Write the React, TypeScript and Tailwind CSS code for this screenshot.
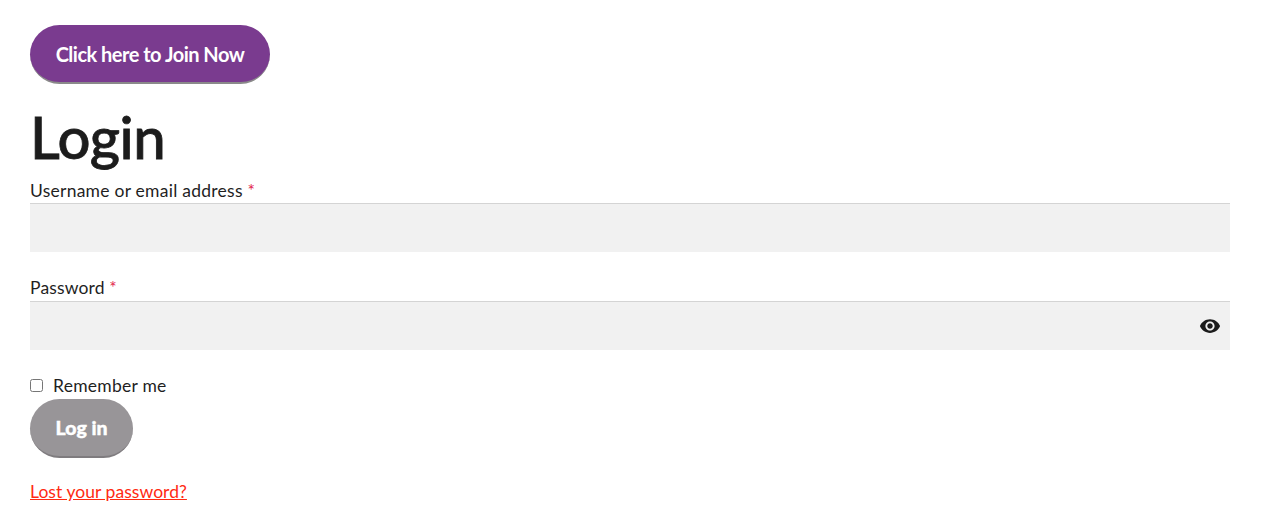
import { MdVisibility } from "react-icons/md";

export default function App() {
  return (
    <div className="min-h-[526px] bg-white px-[30px] pt-[25px] pr-[31px] font-['Lato',sans-serif] text-[#1f1f1f]">
      <a className="flex h-[59px] w-[240px] items-center justify-center rounded-[30px] border-b-2 border-[#8a8a8a] bg-[#7a3b8f] text-[20px] font-bold tracking-[-0.5px] text-white">
        Click here to Join Now
      </a>
      <h1 className="mt-[21px] h-[64px] text-[58px] leading-[64px] font-medium tracking-[-0.5px] text-[#1c1c1c] [-webkit-text-stroke:0.8px_#1c1c1c]">Login</h1>
      <form className="mt-[12px]">
        <div>
          <label className="block h-[22px] text-[17.5px] leading-[20px] tracking-[0.25px]">
            Username or email address <span className="text-[#e2264d]">*</span>
          </label>
          <input type="text" className="block h-[49px] w-full border-t border-[#d4d4d4] bg-[#f1f1f1]" />
        </div>
        <div className="mt-[26px]">
          <label className="block h-[23px] text-[17.5px] leading-[20px] tracking-[0.15px]">
            Password <span className="text-[#e2264d]">*</span>
          </label>
          <div className="relative">
            <input type="password" className="block h-[49px] w-full border-t border-[#d4d4d4] bg-[#f1f1f1]" />
            <MdVisibility className="absolute top-[14px] right-[9px] size-[22px] text-[#1c1c1c]" />
          </div>
        </div>
        <label className="mt-[26px] flex h-[20px] items-center text-[17.5px] leading-[20px] tracking-[0.25px]">
          <input type="checkbox" className="mr-[10px] mb-[2px] size-[13px]" />
          Remember me
        </label>
        <button type="button" className="mt-[3px] block h-[59px] w-[103px] rounded-[30px] border-b-2 border-[#7f7c7f] bg-[#989598] text-[19.5px] font-black text-white [-webkit-text-stroke:0.4px_#ffffff]">
          Log in
        </button>
      </form>
      <a className="mt-[24px] block text-[17.5px] leading-[20px] tracking-[0.05px] text-[#ff2a12] underline">Lost your password?</a>
    </div>
  );
}
